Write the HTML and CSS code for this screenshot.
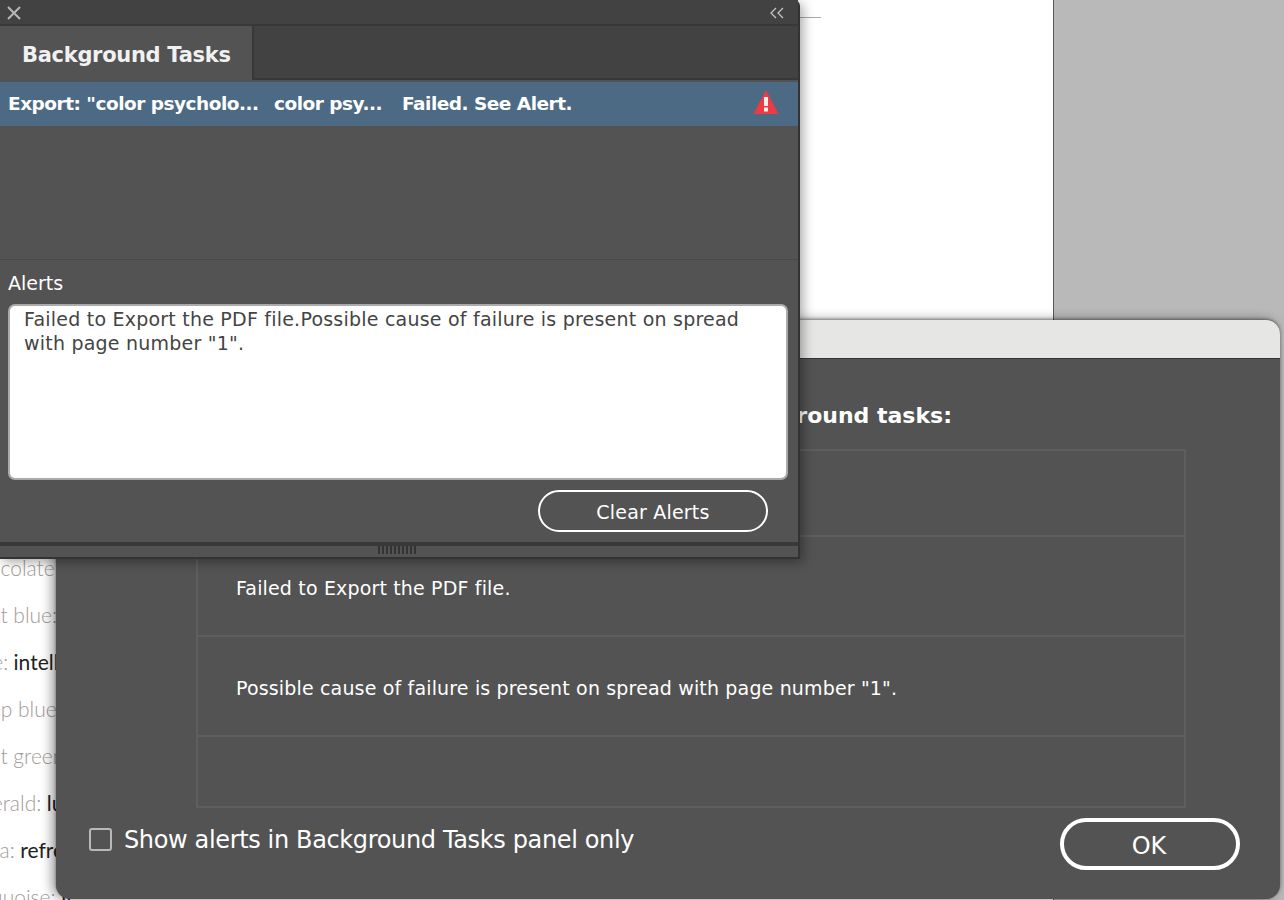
FILE: index.html
```html
<!DOCTYPE html>
<html lang="en">
<head>
<meta charset="utf-8">
<title>Background Tasks</title>
<link rel="stylesheet" href="styles.css">
</head>
<body>
<main class="desktop">
  <section class="doc-page">
    <div class="doc-rule"></div>
    <div class="doc-lines">
      <p class="doc-line muted">Chocolate</p>
      <p class="doc-line muted">Light blue:</p>
      <p class="doc-line"><span class="muted">Blue:</span> intelligence</p>
      <p class="doc-line muted">Deep blue</p>
      <p class="doc-line muted">Light green</p>
      <p class="doc-line"><span class="muted">Emerald:</span> luxury</p>
      <p class="doc-line"><span class="muted">Aqua:</span> refreshing</p>
      <p class="doc-line"><span class="muted">Turquoise:</span> Insight</p>
    </div>
  </section>

  <section class="dialog">
    <div class="dialog-title"></div>
    <div class="dialog-body">
      <h2 class="dialog-heading">The following alerts occurred during background tasks:</h2>
      <div class="alert-table">
        <div class="alert-row row-first"></div>
        <div class="alert-row row-mid">Failed to Export the PDF file.</div>
        <div class="alert-row row-mid">Possible cause of failure is present on spread with page number "1".</div>
        <div class="alert-row row-last"></div>
      </div>
      <div class="dialog-foot">
        <label class="check-label"><span class="check-box"></span>Show alerts in Background Tasks panel only</label>
        <button class="ok-btn" type="button">OK</button>
      </div>
    </div>
  </section>

  <section class="panel">
    <header class="panel-top">
      <svg class="icon-close" width="16" height="16" viewBox="0 0 16 16" aria-hidden="true"><path d="M2 2 L14 14 M14 2 L2 14" stroke="#b8b8b8" stroke-width="2" fill="none"/></svg>
      <svg class="icon-collapse" width="14" height="12" viewBox="0 0 14 12" aria-hidden="true"><path d="M6 1 L1 6 L6 11 M13 1 L8 6 L13 11" stroke="#c4c4c4" stroke-width="1.300" fill="none"/></svg>
    </header>
    <div class="tab-row"><div class="tab">Background Tasks</div><div class="tab-fill"></div></div>
    <div class="task-row">
      <span class="task-name">Export: "color psycholo...</span>
      <span class="task-doc">color psy...</span>
      <span class="task-status">Failed. See Alert.</span>
      <svg class="icon-alert" width="26" height="26" viewBox="0 0 26 26" aria-hidden="true"><path d="M13 1 L25.500 25 L0.500 25 Z" fill="#ee3a43"/><rect x="11" y="8" width="4" height="9" fill="#f4f0f0"/><rect x="11" y="18.500" width="4" height="4" fill="#f4f0f0"/></svg>
    </div>
    <div class="task-empty"></div>
    <div class="alerts">
      <div class="alerts-label">Alerts</div>
      <div class="alerts-box">Failed to Export the PDF file.Possible cause of failure is present on spread with page number "1".</div>
      <div class="alerts-actions"><button class="clear-btn" type="button">Clear Alerts</button></div>
    </div>
    <footer class="panel-foot"><span class="grip"></span></footer>
  </section>
</main>
</body>
</html>
```
FILE: styles.css
```css
* { box-sizing: border-box; }
html, body { margin: 0; height: 100%; overflow: hidden; }
body { background: #b9b9b9; font-family: "DejaVu Sans", sans-serif; }
.desktop { position: relative; width: 1284px; height: 900px; overflow: hidden; }

.doc-page { width: 1054px; height: 900px; background: #fff; border-right: 1px solid #5a5a5a; padding-top: 17px; }
.doc-rule { width: 21px; height: 1px; margin-left: 800px; background: #aaa; }
.doc-lines { padding-top: 532px; margin-left: -37px; width: 107px; overflow: hidden; white-space: nowrap; font-family: Lato, sans-serif; font-size: 21px; color: #222; }
.doc-line { margin: 0; height: 47px; line-height: 36px; }
.muted { color: #a29b97; font-weight: 300; }

.dialog { position: absolute; left: 56px; top: 320px; width: 1224px; height: 579px; border-radius: 14px; overflow: hidden; background: #535353; box-shadow: -4px 0 12px rgba(0,0,0,.4), 0 -1px 3px rgba(0,0,0,.4); }
.dialog-title { height: 39px; background: #e6e6e4; border-bottom: 1px solid #333; }
.dialog-body { padding: 0 40px 0 33px; }
.dialog-heading { margin: 0; height: 90px; padding-top: 42px; padding-right: 288px; text-align: right; font-size: 22px; font-weight: 700; color: #fff; white-space: nowrap; line-height: 30px; }
.alert-table { margin-left: 107px; width: 990px; height: 359px; border: 2px solid #5e5e5e; }
.alert-row { display: flex; align-items: center; padding: 4px 0 0 38px; border-bottom: 2px solid #5e5e5e; color: #fff; font-size: 19px; letter-spacing: .16px; }
.row-first { height: 86px; }
.row-mid { height: 100px; }
.row-last { height: 69px; border-bottom: 0; }
.dialog-foot { display: flex; align-items: center; justify-content: space-between; padding-top: 10px; }
.check-label { display: flex; align-items: center; gap: 12px; font-size: 24px; letter-spacing: -.36px; color: #fff; margin-top: -8px; }
.check-box { width: 23px; height: 23px; border: 2px solid #b8b8b8; border-radius: 3px; margin-top: -2px; }
.ok-btn { width: 180px; height: 52px; border: 4px solid #fff; border-radius: 26px; background: transparent; color: #fff; font: 24px "DejaVu Sans", sans-serif; padding: 3px 2px 0 0; }

.panel { position: absolute; left: 0; top: 0; width: 800px; height: 559px; background: #535353; border-right: 2px solid #333; border-bottom: 2px solid #333; border-top-right-radius: 6px; box-shadow: 3px 3px 12px rgba(0,0,0,.35); }
.panel-top { display: flex; align-items: center; justify-content: space-between; height: 26px; padding: 2px 14px 0 6px; background: #424242; border-bottom: 2px solid #383838; }
.tab-row { display: flex; height: 54px; margin-bottom: 2px; background: #424242; }
.tab { width: 252px; height: 54px; padding: 4px 0 0 22px; background: #535353; color: #f1f1f1; font-size: 21px; letter-spacing: -.3px; font-weight: 700; line-height: 50px; white-space: nowrap; }
.tab-fill { flex: 1; border-left: 2px solid #383838; border-bottom: 2px solid #383838; }
.task-row { display: flex; align-items: center; height: 44px; padding-bottom: 1px; background: #4d6a85; color: #fff; font-size: 18.5px; letter-spacing: -.5px; font-weight: 700; white-space: nowrap; }
.task-name { width: 274px; padding-left: 8px; }
.task-doc { width: 128px; }
.task-status { flex: 1; }
.icon-alert { margin: -3px 19px 0 0; }
.task-empty { height: 134px; border-bottom: 1px solid #484848; }
.alerts { padding: 10px 10px 0 8px; }
.alerts-label { height: 34px; color: #fff; font-size: 19px; line-height: 26px; }
.alerts-box { height: 176px; padding: 1px 14px; background: #fff; border: 2px solid #aaa; border-radius: 7px; color: #444; font-size: 19px; letter-spacing: .22px; line-height: 24px; }
.alerts-actions { display: flex; justify-content: flex-end; padding: 10px 20px 0 0; }
.clear-btn { width: 230px; height: 42px; border: 2px solid #fff; border-radius: 21px; background: transparent; color: #fff; font: 19px "DejaVu Sans", sans-serif; letter-spacing: .2px; padding: 2px 0 0; }
.panel-foot { display: flex; justify-content: center; margin-top: 10px; height: 13px; border-top: 4px solid #383838; padding-right: 4px; }
.grip { width: 38px; height: 8px; background: repeating-linear-gradient(90deg, #333 0 2px, transparent 2px 4px); }
```
